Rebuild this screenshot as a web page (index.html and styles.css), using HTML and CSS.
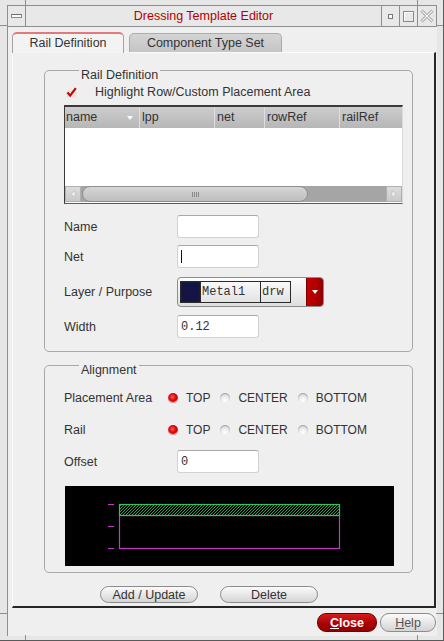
FILE: index.html
```html
<!DOCTYPE html>
<html>
<head>
<meta charset="utf-8">
<title>Dressing Template Editor</title>
<link rel="stylesheet" href="styles.css">
</head>
<body>
<div class="window">
  <span class="tick tick-v t-top-l"></span>
  <span class="tick tick-v t-top-r"></span>
  <span class="tick tick-v t-bot-l"></span>
  <span class="tick tick-v t-bot-r"></span>
  <span class="tick tick-h t-left-t"></span>
  <span class="tick tick-h t-left-b"></span>
  <span class="tick tick-h t-right-t"></span>
  <span class="tick tick-h t-right-b"></span>

  <div class="main">
    <div class="titlebar">
      <div class="tb-btn tb-menu"><span class="menu-icon"></span></div>
      <div class="title">Dressing Template Editor</div>
      <div class="tb-btn tb-min"><span class="min-icon"></span></div>
      <div class="tb-btn tb-max"><span class="max-icon"></span></div>
      <div class="tb-btn tb-close">
        <svg width="14" height="14" viewBox="0 0 14 14">
          <path d="M1.5 1.5 L12.5 12.5 M12.5 1.5 L1.5 12.5" stroke="#9a9a9a" stroke-width="3" fill="none"/>
          <path d="M1.5 1.5 L12.5 12.5 M12.5 1.5 L1.5 12.5" stroke="#f4f4f4" stroke-width="1.2" fill="none"/>
        </svg>
      </div>
    </div>

    <div class="client">
      <div class="tabs">
        <div class="tab tab-active">Rail Definition</div>
        <div class="tab tab-inactive">Component Type Set</div>
      </div>

      <div class="panel">
        <fieldset class="group group-rail">
          <legend>Rail Definition</legend>
          <div class="fs-body fs-body-rail">
            <div class="check-row">
              <svg class="checkbox" width="11" height="11" viewBox="0 0 11 11">
                <rect x="0.5" y="3.5" width="10" height="7" fill="#e2e2e2"/>
                <path d="M1.5 5.5 L4.2 8.6 L9.8 1.2" stroke="#c80000" stroke-width="2.2" fill="none"/>
              </svg>
              <span class="check-label">Highlight Row/Custom Placement Area</span>
            </div>

            <div class="table">
              <div class="thead">
                <div class="hcell col-name">name<span class="sort-arrow"></span></div>
                <div class="hcell col-lpp">lpp</div>
                <div class="hcell col-net">net</div>
                <div class="hcell col-row">rowRef</div>
                <div class="hcell col-rail">railRef</div>
              </div>
              <div class="tbody"></div>
              <div class="hscroll">
                <div class="sb-arrow">
                  <svg width="8" height="8" viewBox="0 0 8 8"><path d="M6 1 L2 4 L6 7 Z" fill="#f4f4f4" stroke="#b8b8b8" stroke-width="0.6"/></svg>
                </div>
                <div class="sb-thumb"><span class="grip"></span></div>
                <div class="sb-track"></div>
                <div class="sb-arrow">
                  <svg width="8" height="8" viewBox="0 0 8 8"><path d="M2 1 L6 4 L2 7 Z" fill="#f4f4f4" stroke="#b8b8b8" stroke-width="0.6"/></svg>
                </div>
              </div>
            </div>

            <div class="frow frow-name">
              <span class="flabel">Name</span>
              <div class="input"></div>
            </div>
            <div class="frow frow-net">
              <span class="flabel">Net</span>
              <div class="input"><span class="caret"></span></div>
            </div>
            <div class="frow frow-layer">
              <span class="flabel">Layer / Purpose</span>
              <div class="combo">
                <div class="combo-box">
                  <span class="swatch"></span>
                  <span class="combo-layer">Metal1</span>
                  <span class="combo-purpose">drw</span>
                </div>
                <div class="combo-arrow"><span class="tri-down"></span></div>
              </div>
            </div>
            <div class="frow frow-width">
              <span class="flabel">Width</span>
              <div class="input mono">0.12</div>
            </div>
          </div>
        </fieldset>

        <fieldset class="group group-align">
          <legend>Alignment</legend>
          <div class="fs-body fs-body-align">
            <div class="rrow rrow-first">
              <span class="rlabel">Placement Area</span>
              <div class="opts">
                <span class="opt"><span class="radio on"></span>TOP</span>
                <span class="opt"><span class="radio"></span>CENTER</span>
                <span class="opt"><span class="radio"></span>BOTTOM</span>
              </div>
            </div>
            <div class="rrow rrow-second">
              <span class="rlabel">Rail</span>
              <div class="opts">
                <span class="opt"><span class="radio on"></span>TOP</span>
                <span class="opt"><span class="radio"></span>CENTER</span>
                <span class="opt"><span class="radio"></span>BOTTOM</span>
              </div>
            </div>
            <div class="frow frow-offset">
              <span class="flabel">Offset</span>
              <div class="input mono">0</div>
            </div>
            <div class="preview">
              <svg width="329" height="80" viewBox="0 0 329 80">
                <defs>
                  <pattern id="hatch" width="3" height="3" patternUnits="userSpaceOnUse">
                    <path d="M-1 1 L1 -1 M0 3 L3 0 M2 4 L4 2" stroke="#2fae58" stroke-width="0.9"/>
                  </pattern>
                </defs>
                <rect x="54.5" y="29.5" width="220" height="33" fill="none" stroke="#c23cc2" stroke-width="1.2"/>
                <rect x="54.5" y="18.5" width="220" height="11" fill="url(#hatch)" stroke="#36c060" stroke-width="1.2"/>
                <path d="M43 18.5 H49 M43 40.5 H49 M43 62.5 H49" stroke="#c23cc2" stroke-width="1.2"/>
              </svg>
            </div>
          </div>
        </fieldset>

        <div class="panel-buttons">
          <div class="pill">Add / Update</div>
          <div class="pill">Delete</div>
        </div>
      </div>

      <div class="dialog-buttons">
        <div class="pill pill-close"><span class="u">C</span>lose</div>
        <div class="pill pill-help"><span class="u">H</span>elp</div>
      </div>
    </div>
  </div>
</div>
</body>
</html>
```

FILE: styles.css
```css
* { box-sizing: border-box; }

html, body {
  margin: 0;
  padding: 0;
}

body {
  width: 444px;
  height: 641px;
  overflow: hidden;
  background: #e6e6e6;
  font-family: "Liberation Sans", Arial, Helvetica, sans-serif;
  font-size: 12.5px;
  color: #333;
}

.window {
  position: relative;
  width: 444px;
  height: 641px;
  padding: 5px 6px 4px 7px;
  background: #e6e6e6;
  border-right: 1px solid #5a5a5a;
  border-bottom: 1px solid #5a5a5a;
  display: flex;
  flex-direction: column;
}

/* frame resize ticks */
.tick { position: absolute; background: #8e8e8e; }
.tick-v { width: 1px; height: 5px; }
.tick-h { width: 7px; height: 1px; left: 0; }
.t-top-l { left: 25px; top: 0; }
.t-top-r { left: 417px; top: 0; }
.t-bot-l { left: 25px; bottom: 0; }
.t-bot-r { left: 417px; bottom: 0; }
.t-left-t { top: 25px; }
.t-left-b { top: 613px; }
.t-right-t { top: 25px; left: auto; right: 0; }
.t-right-b { top: 613px; left: auto; right: 0; }

.main {
  flex: 1;
  display: flex;
  flex-direction: column;
}

/* title bar */
.titlebar {
  height: 22px;
  flex: none;
  display: flex;
  border: 1px solid #8e8e8e;
  background: #e8e8e8;
}

.tb-btn {
  display: flex;
  align-items: center;
  justify-content: center;
  width: 18px;
}

.tb-menu { border-right: 1px solid #8e8e8e; }
.tb-min, .tb-max { border-left: 1px solid #8e8e8e; }
.tb-close { border-left: 1px solid #8e8e8e; width: 19px; }

.menu-icon {
  width: 11px;
  height: 4px;
  border: 1px solid #8a8a8a;
  border-top-color: #6c6c6c;
  background: #fafafa;
}

.min-icon {
  width: 5px;
  height: 5px;
  border: 1px solid #777;
  background: #fafafa;
}

.max-icon {
  width: 11px;
  height: 11px;
  border: 1px solid #888;
  box-shadow: inset 1px 1px 0 #fff;
}

.title {
  flex: 1;
  text-align: center;
  line-height: 20px;
  color: #b40000;
  font-size: 12.5px;
}

/* client area */
.client {
  flex: 1;
  background: #efefef;
  border-left: 1px solid #8e8e8e;
  padding: 6px 1px 0 4px;
  display: flex;
  flex-direction: column;
}

.tabs {
  height: 20px;
  flex: none;
  display: flex;
  align-items: flex-end;
  gap: 5px;
  position: relative;
  z-index: 1;
  margin-bottom: -1px;
}

.tab {
  display: flex;
  align-items: center;
  justify-content: center;
  border: 1px solid #a2a2a2;
  border-bottom: none;
  border-radius: 5px 5px 0 0;
}

.tab-active {
  width: 112px;
  height: 21px;
  background: #f3f3f3;
  border-top: 2px solid #e27a7a;
  padding-bottom: 1px;
}

.tab-inactive {
  width: 153px;
  height: 19px;
  background: linear-gradient(#d4d4d4, #c5c5c5);
  border-color: #acacac;
  margin-bottom: 1px;
}

.panel {
  height: 556px;
  flex: none;
  background: #efefef;
  border-left: 1px solid #fbfbfb;
  border-top: 1px solid #fbfbfb;
  border-right: 2px solid #262626;
  border-bottom: 2px solid #262626;
  padding: 5px 0 0 31px;
}

/* group boxes */
.group {
  width: 369px;
  margin: 0;
  padding: 0;
  border: 1px solid #a8a8a8;
  border-radius: 5px;
}

.group legend {
  margin-left: 34px;
  padding: 10px 2px 0;
  line-height: 14px;
  font-size: 12.5px;
  color: #333;
}

.group-align { margin-top: 1px; }

.fs-body { padding-left: 19px; }
.fs-body-rail { padding-bottom: 13px; }
.fs-body-align { padding-bottom: 6px; }

.check-row {
  margin-top: 3px;
  height: 14px;
  display: flex;
  align-items: center;
}

.checkbox { margin-left: 2px; }
.check-label { margin-left: 18px; }

/* table */
.table {
  margin-top: 6px;
  width: 339px;
  height: 99px;
  border-top: 2px solid #3a3a3a;
  border-left: 1px solid #3a3a3a;
  border-right: 1px solid #dadada;
  border-bottom: 1px solid #5a5a5a;
  background: #fff;
  display: flex;
  flex-direction: column;
}

.thead {
  height: 21px;
  flex: none;
  display: flex;
  background: linear-gradient(#cdcdcd, #b6b6b6);
}

.hcell {
  position: relative;
  height: 21px;
  line-height: 21px;
  padding-left: 1px;
  border-right: 1px solid #dedede;
  color: #333;
}

.col-name { width: 75px; }
.col-lpp { width: 75px; padding-left: 2px; }
.col-net { width: 50px; padding-left: 2px; }
.col-row { width: 75px; padding-left: 2px; }
.col-rail { flex: 1; border-right: none; padding-left: 2px; }

.sort-arrow {
  position: absolute;
  left: 62px;
  top: 9px;
  width: 0;
  height: 0;
  border-left: 3.5px solid transparent;
  border-right: 3.5px solid transparent;
  border-top: 4px solid #fafafa;
}

.tbody { flex: 1; background: #fff; }

.hscroll {
  height: 16px;
  flex: none;
  display: flex;
  background: #a5a5a5;
  margin-bottom: 1px;
}

.sb-arrow {
  width: 16px;
  display: flex;
  align-items: center;
  justify-content: center;
  background: linear-gradient(#dcdcdc, #c9c9c9);
  border: 1px solid #b0b0b0;
}

.sb-thumb {
  width: 226px;
  margin-left: 1px;
  border: 1px solid #8f8f8f;
  border-radius: 8px;
  background: linear-gradient(#d6d6d6, #bdbdbd);
  display: flex;
  align-items: center;
  justify-content: center;
}

.grip {
  width: 7px;
  height: 5px;
  background: repeating-linear-gradient(90deg, #888 0 1px, transparent 1px 2px);
}

.sb-track { flex: 1; background: #a5a5a5; }

/* form rows */
.frow {
  display: flex;
  align-items: center;
}

.flabel { width: 113px; }

.frow-name { margin-top: 11px; }
.frow-net { margin-top: 7px; }
.frow-layer { margin-top: 9px; }
.frow-width { margin-top: 8px; }
.frow-offset { margin-top: 10px; }

.input {
  width: 82px;
  height: 23px;
  background: #fff;
  border: 1px solid #d2d2d2;
  border-top-color: #a8a8a8;
  border-radius: 3px;
  display: flex;
  align-items: center;
  padding-left: 3px;
}

.mono {
  font-family: "Liberation Mono", "Courier New", monospace;
  font-size: 12px;
  color: #333;
}

.caret {
  width: 1px;
  height: 13px;
  background: #111;
}

/* combo */
.combo {
  width: 147px;
  height: 30px;
  border: 1px solid #8c8c8c;
  border-radius: 4px;
  background: linear-gradient(#fdfdfd, #dedede);
  display: flex;
  align-items: center;
  padding-left: 2px;
  overflow: hidden;
}

.combo-box {
  width: 111px;
  height: 22px;
  border: 1px solid #2a2a2a;
  display: flex;
  font-family: "Liberation Mono", "Courier New", monospace;
  font-size: 12px;
  color: #333;
}

.swatch {
  width: 20px;
  border-right: 1px solid #2a2a2a;
  background-color: #05052e;
  background-image: radial-gradient(circle, #24245e 0.6px, transparent 0.8px);
  background-size: 2px 2px;
  box-shadow: inset 0 0 0 1px #1a1a40;
}

.combo-layer {
  width: 60px;
  border-right: 1px solid #2a2a2a;
  padding-left: 1px;
  line-height: 20px;
}

.combo-purpose {
  flex: 1;
  padding-left: 1px;
  line-height: 20px;
}

.combo-arrow {
  margin-left: auto;
  width: 17px;
  align-self: stretch;
  background: linear-gradient(90deg, #c40000, #a80000 70%, #8a0000);
  border-left: 1px solid #7a0000;
  display: flex;
  align-items: center;
  justify-content: center;
}

.tri-down {
  width: 0;
  height: 0;
  border-left: 3.5px solid transparent;
  border-right: 3.5px solid transparent;
  border-top: 4px solid #fff;
}

/* radio rows */
.rrow {
  height: 20px;
  display: flex;
  align-items: center;
}

.rrow-first { margin-top: 11px; }
.rrow-second { margin-top: 12px; }

.rlabel { width: 104px; }

.opts {
  display: flex;
  gap: 10px;
  font-size: 12px;
}

.opt {
  display: flex;
  align-items: center;
  gap: 8px;
}

.radio {
  width: 10px;
  height: 10px;
  border-radius: 50%;
  background: radial-gradient(circle at 50% 75%, #ffffff 0, #f0f0f0 35%, #c4c4c4 100%);
  box-shadow: inset 0 1px 1px #a8a8a8;
}

.radio.on {
  background: radial-gradient(circle at 45% 40%, #ff5a5a 0, #d80000 45%, #8c0000 100%);
  box-shadow: inset 0 -1px 1px #ffb0b0;
}

/* preview canvas */
.preview {
  margin-top: 13px;
  margin-left: 1px;
  width: 329px;
  height: 80px;
  background: #000;
}

.preview svg { display: block; }

/* buttons */
.panel-buttons {
  margin-top: 13px;
  margin-left: 56px;
  display: flex;
  gap: 22px;
}

.pill {
  width: 98px;
  height: 17px;
  border: 1px solid #8c8c8c;
  border-radius: 9px;
  background: linear-gradient(#fbfbfb, #d4d4d4);
  display: flex;
  align-items: center;
  justify-content: center;
  color: #333;
}

.dialog-buttons {
  margin-top: 5px;
  display: flex;
  justify-content: flex-end;
  gap: 3px;
}

.pill-close {
  width: 60px;
  height: 19px;
  border-color: #6e0000;
  background: linear-gradient(#d81c1c, #a80000 60%, #900000);
  color: #fff;
  font-weight: bold;
}

.pill-help {
  width: 56px;
  height: 19px;
  color: #555;
}

.u { text-decoration: underline; }
```
